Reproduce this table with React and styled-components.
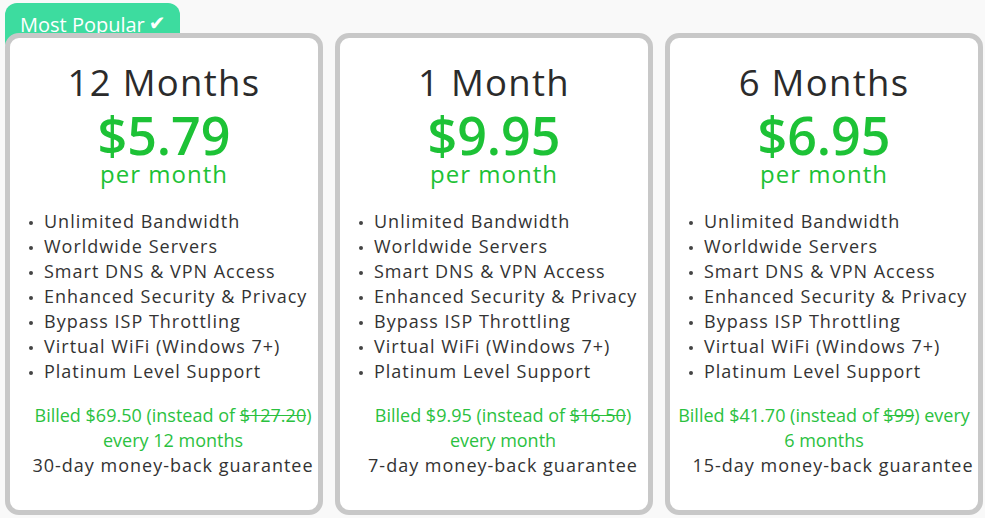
import React from 'react';
import styled, { createGlobalStyle } from 'styled-components';

const GlobalStyle = createGlobalStyle`
  body {
    margin: 0;
    background: #f9f9f9;
    font-family: "Open Sans", "DejaVu Sans", sans-serif;
  }
`;

const Page = styled.div`
  display: flex;
  gap: 12px;
  padding: 33px 0 0 5px;
`;

const Column = styled.div`
  position: relative;
`;

const Badge = styled.div`
  position: absolute;
  top: -30px;
  left: 0;
  width: 175px;
  height: 50px;
  box-sizing: border-box;
  padding: 7px 0 0 15px;
  background: #3ddc9f;
  border-radius: 12px;
  color: #fff;
  font-size: 20px;
  line-height: 26px;
`;

const Check = styled.span`
  display: inline-block;
  margin-left: 4px;
  font-size: 20px;
  vertical-align: 2px;
`;

const Card = styled.div`
  position: relative;
  z-index: 1;
  width: 318px;
  height: 482px;
  box-sizing: border-box;
  border: 5px solid #c8c8c8;
  border-radius: 14px;
  background: #fff;
  padding-top: 22px;
  text-align: center;
`;

const Title = styled.div`
  font-size: 36.5px;
  line-height: 44px;
  letter-spacing: 1.3px;
  color: #2b2b2b;
`;

const Price = styled.div`
  margin-top: 4px;
  font-size: 52px;
  line-height: 54px;
  font-weight: 600;
  color: #1dc236;
`;

const PerMonth = styled.div`
  font-size: 24px;
  line-height: 24px;
  letter-spacing: 1px;
  color: #1dc236;
`;

const Features = styled.ul`
  list-style: none;
  margin: 23px 0 0;
  padding: 0 0 0 19px;
  text-align: left;
`;

const Feature = styled.li`
  font-size: 18px;
  line-height: 25px;
  letter-spacing: 1px;
  color: #333;

  &::before {
    content: "";
    display: inline-block;
    width: 4px;
    height: 4px;
    border-radius: 50%;
    background: #444;
    vertical-align: middle;
    margin-right: 11px;
  }
`;

const Billed = styled.div`
  margin-top: 19px;
  padding-left: ${(p) => (p.$shift ? '18px' : '0')};
  font-size: 18px;
  line-height: 25px;
  color: #2bc13f;
  white-space: nowrap;
`;

const Old = styled.s`
  text-decoration-thickness: 1px;
`;

const Guarantee = styled.div`
  padding-left: 18px;
  font-size: 18px;
  line-height: 25px;
  letter-spacing: 1px;
  color: #333;
  white-space: nowrap;
`;

const features = [
  'Unlimited Bandwidth',
  'Worldwide Servers',
  'Smart DNS & VPN Access',
  'Enhanced Security & Privacy',
  'Bypass ISP Throttling',
  'Virtual WiFi (Windows 7+)',
  'Platinum Level Support',
];

const plans = [
  {
    title: '12 Months',
    price: '$5.79',
    billed: '$69.50',
    old: '$127.20',
    line1: ')',
    line2: 'every 12 months',
    shift: true,
    days: 30,
    popular: true,
  },
  {
    title: '1 Month',
    price: '$9.95',
    billed: '$9.95',
    old: '$16.50',
    line1: ')',
    line2: 'every month',
    shift: true,
    days: 7,
  },
  {
    title: '6 Months',
    price: '$6.95',
    billed: '$41.70',
    old: '$99',
    line1: ') every',
    line2: '6 months',
    shift: false,
    days: 15,
  },
];

function App() {
  return (
    <>
      <GlobalStyle />
      <Page>
        {plans.map((plan) => (
          <Column key={plan.title}>
            {plan.popular && (
              <Badge>
                Most Popular<Check>✔</Check>
              </Badge>
            )}
            <Card>
              <Title>{plan.title}</Title>
              <Price>{plan.price}</Price>
              <PerMonth>per month</PerMonth>
              <Features>
                {features.map((f) => (
                  <Feature key={f}>{f}</Feature>
                ))}
              </Features>
              <Billed $shift={plan.shift}>
                Billed {plan.billed} (instead of <Old>{plan.old}</Old>
                {plan.line1}
                <br />
                {plan.line2}
              </Billed>
              <Guarantee>{plan.days}-day money-back guarantee</Guarantee>
            </Card>
          </Column>
        ))}
      </Page>
    </>
  );
}

export default App;
